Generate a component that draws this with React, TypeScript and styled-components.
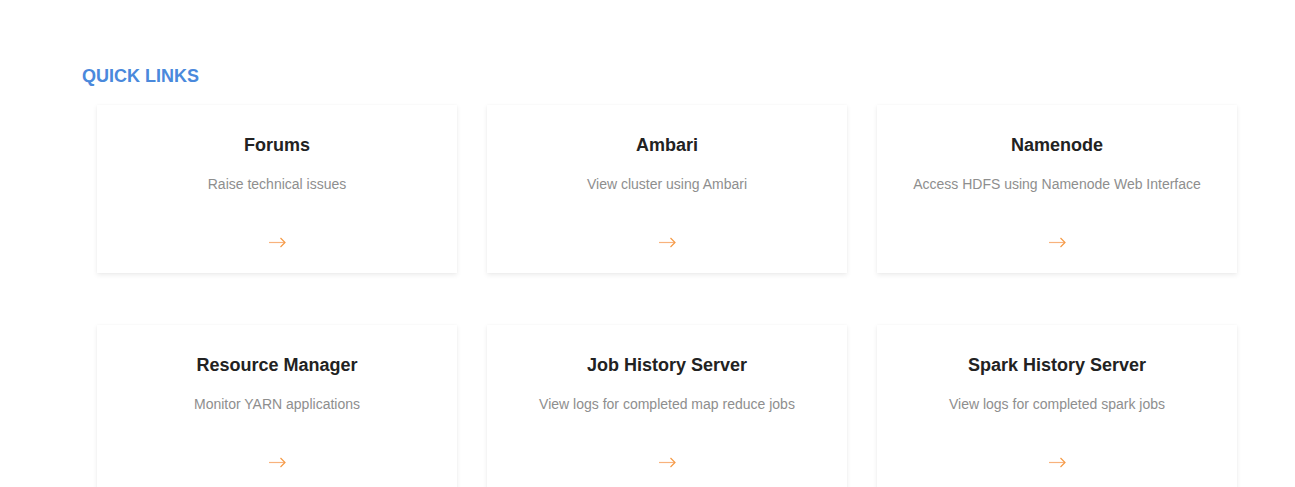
import React from "react";
import styled, { createGlobalStyle } from "styled-components";

const Global = createGlobalStyle`
  html, body { margin: 0; padding: 0; background: #ffffff; }
  body { font-family: "Liberation Sans", Arial, sans-serif; }
`;

const Section = styled.section`
  padding: 66px 0 0 82px;
`;

const Heading = styled.h2`
  margin: 0;
  font-size: 18px;
  line-height: 21px;
  font-weight: 700;
  color: #4a89dc;
`;

const Grid = styled.div`
  display: grid;
  grid-template-columns: repeat(3, 360px);
  column-gap: 30px;
  row-gap: 52px;
  margin: 18px 0 0 15px;
`;

const Card = styled.a`
  display: flex;
  flex-direction: column;
  align-items: center;
  background: #fff;
  padding: 30px 20px 23px;
  text-decoration: none;
  box-shadow: 0 2px 5px rgba(0, 0, 0, 0.08), 0 0 2px rgba(0, 0, 0, 0.03);
`;

const Title = styled.h3`
  margin: 0;
  font-size: 18px;
  line-height: 20px;
  font-weight: 700;
  color: #222;
`;

const Desc = styled.p`
  margin: 19px 0 0;
  font-size: 14px;
  line-height: 20px;
  color: #8e8e8e;
`;

const ArrowWrap = styled.span`
  display: flex;
  margin-top: 40px;
  width: 18px;
  height: 16px;
`;

const Arrow = () => (
  <svg width="18" height="16" viewBox="0 0 18 16" fill="none">
    <path d="M1 8.5H17" stroke="#f8b27c" strokeWidth="1.2" />
    <path d="M12.5 4L17 8.5L12.5 13" stroke="#f59a45" strokeWidth="1.2" />
  </svg>
);

const links = [
  { title: "Forums", desc: "Raise technical issues" },
  { title: "Ambari", desc: "View cluster using Ambari" },
  { title: "Namenode", desc: "Access HDFS using Namenode Web Interface" },
  { title: "Resource Manager", desc: "Monitor YARN applications" },
  { title: "Job History Server", desc: "View logs for completed map reduce jobs" },
  { title: "Spark History Server", desc: "View logs for completed spark jobs" },
];

export default function App() {
  return (
    <>
      <Global />
      <Section>
        <Heading>QUICK LINKS</Heading>
        <Grid>
          {links.map((l) => (
            <Card key={l.title} href="#">
              <Title>{l.title}</Title>
              <Desc>{l.desc}</Desc>
              <ArrowWrap>
                <Arrow />
              </ArrowWrap>
            </Card>
          ))}
        </Grid>
      </Section>
    </>
  );
}
